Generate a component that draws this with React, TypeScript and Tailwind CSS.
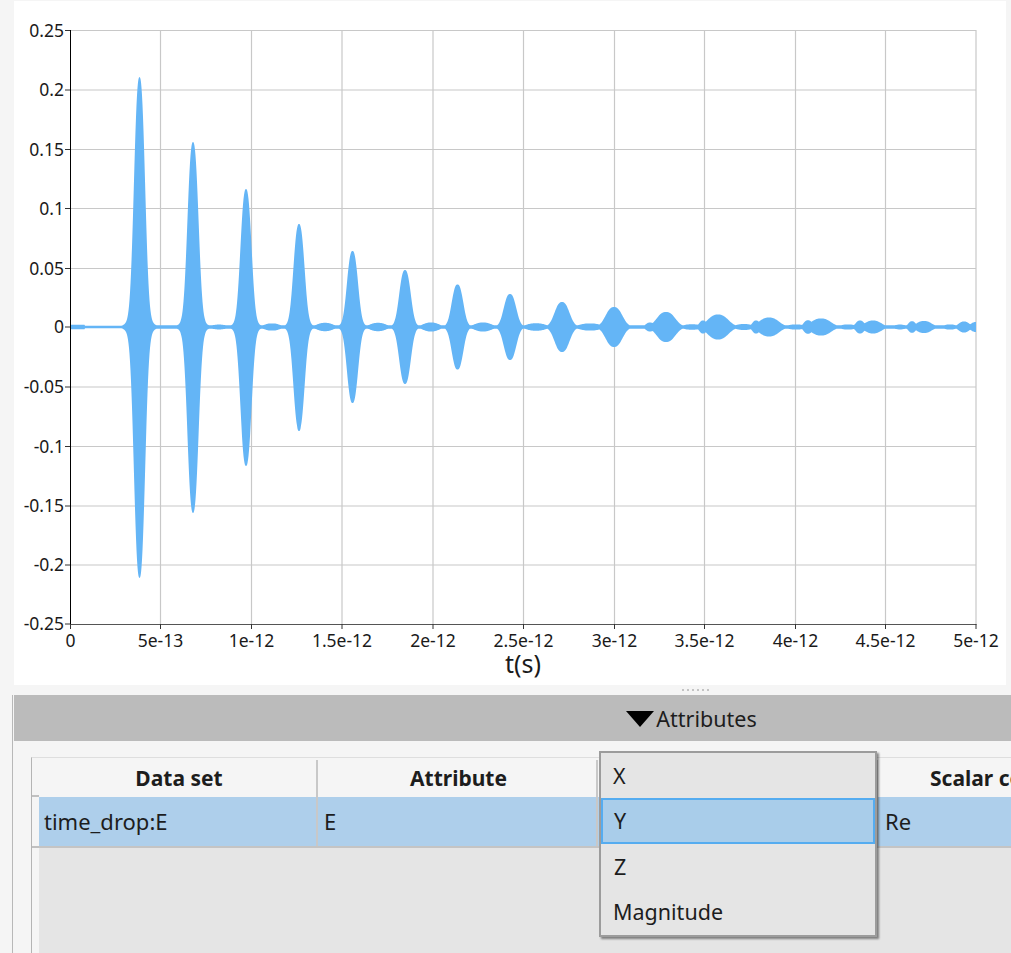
const xTicks = [
  { x: 70.5, label: '0' },
  { x: 160.5, label: '5e-13' },
  { x: 251.5, label: '1e-12' },
  { x: 342, label: '1.5e-12' },
  { x: 433, label: '2e-12' },
  { x: 523.5, label: '2.5e-12' },
  { x: 614.5, label: '3e-12' },
  { x: 704.5, label: '3.5e-12' },
  { x: 795.5, label: '4e-12' },
  { x: 885.5, label: '4.5e-12' },
  { x: 976, label: '5e-12' },
]

const yTicks = [
  { y: 30.5, label: '0.25' },
  { y: 90, label: '0.2' },
  { y: 149.5, label: '0.15' },
  { y: 208.5, label: '0.1' },
  { y: 268.5, label: '0.05' },
  { y: 327, label: '0' },
  { y: 387, label: '-0.05' },
  { y: 446.5, label: '-0.1' },
  { y: 506, label: '-0.15' },
  { y: 565, label: '-0.2' },
  { y: 624, label: '-0.25' },
]

// x centre, amplitude in px, sigma
const peaks = [
  [139.5, 250, 5], [193, 185, 5], [246, 138, 5], [299, 103, 5], [352.5, 76, 5],
  [405, 57, 5.2], [457.5, 42.5, 5.2], [510, 33, 5.6], [562, 25, 6.7], [614, 20, 7.5],
  [666, 15, 8.3], [718, 12.5, 9.2], [769, 9.5, 8.9], [821, 8.5, 9], [873, 6.5, 7.5],
  [924, 6, 7], [964, 5.5, 5],
]

// small lobes between the main bursts
const lobes = [
  [166, 1.6, 7], [219, 2.4, 7.5], [272, 3.6, 7.5], [325, 4.2, 7.5], [378, 4.2, 7.5],
  [431, 4.5, 7.5], [483, 4.5, 8], [536, 3.8, 9], [590, 3.6, 10], [650, 4.5, 4],
  [703, 6.5, 3.5], [756, 6.5, 3.5], [808, 6.8, 4], [860, 6.5, 4], [912, 5.8, 3.5],
  [692, 2.8, 8], [744, 3, 8], [796, 2.6, 8], [848, 2.6, 7], [900, 2.4, 6], [950, 2.6, 6], [976, 5, 5],
]

function envelope(x: number) {
  let e = x < 85 ? 2.2 : x < 125 ? 1.2 : 1.8
  for (const [c, a, s] of peaks) {
    const d = Math.abs(x - c)
    // rounded tip with a small flare at the foot
    const v = a * (0.93 * Math.exp(-Math.pow(d / (1.39 * s), 2.5)) + 0.07 * Math.exp(-Math.pow(d / (2.2 * s), 2)))
    if (v > e) e = v
  }
  for (const [c, a, s] of lobes) {
    const v = a * Math.exp(-Math.pow(Math.abs(x - c) / (1.39 * s), 2.5))
    if (v > e) e = v
  }
  return e
}

function wavePath() {
  const top: string[] = []
  const bottom: string[] = []
  for (let x = 70.5; x <= 976; x += 0.5) {
    const e = envelope(x)
    top.push(`${x},${(327 - e).toFixed(1)}`)
    bottom.unshift(`${x},${(327 + e + (e > 100 ? 1 : 0)).toFixed(1)}`)
  }
  return `M${top.join('L')}L${bottom.join('L')}Z`
}

function Chart() {
  return (
    <svg viewBox="14 1 992 684" className="block w-[992px] h-[684px]">
      {xTicks.slice(1).map((t) => (
        <line key={t.x} x1={t.x} x2={t.x} y1={30} y2={624} stroke="#c8c8c8" strokeWidth="1.2" />
      ))}
      {yTicks.slice(0, -1).map((t) => (
        <line key={t.y} x1={70} x2={976} y1={t.y} y2={t.y} stroke="#c8c8c8" strokeWidth="1.2" />
      ))}
      <path d={wavePath()} fill="#64b5f6" />
      <line x1={70.5} x2={70.5} y1={30} y2={624.5} stroke="#000" />
      <line x1={70} x2={976.5} y1={624.5} y2={624.5} stroke="#555" />
      {yTicks.map((t) => (
        <g key={t.label}>
          <line x1={65} x2={70} y1={t.y} y2={t.y} stroke="#333" />
          <text x={64} y={t.y + 6} textAnchor="end" fontSize="17.5" fill="#1a1a1a" fontFamily="'Noto Sans', sans-serif">{t.label}</text>
        </g>
      ))}
      {xTicks.map((t) => (
        <g key={t.label}>
          <line x1={t.x} x2={t.x} y1={624} y2={629} stroke="#333" />
          <text x={t.x} y={647} textAnchor="middle" fontSize="17.5" fill="#1a1a1a" fontFamily="'Noto Sans', sans-serif">{t.label}</text>
        </g>
      ))}
      <text x={523} y={673} textAnchor="middle" fontSize="25" fill="#1a1a1a" fontFamily="'Noto Sans', sans-serif">t(s)</text>
    </svg>
  )
}

function AttributeTable() {
  return (
    <div className="ml-[17px] mt-4 flex h-[196px] border-l border-t border-l-[#b4b4b4] border-t-[#dedede]">
      <div className="w-[7px] shrink-0 flex flex-col bg-[#f5f5f5]">
        <div className="h-[39px] border-b-2 border-[#c0c0c0]" />
        <div className="h-[51px] border-b-2 border-[#c0c0c0]" />
      </div>
      <div className="flex-1 flex flex-col bg-[#e5e5e5] overflow-hidden">
        <div className="flex h-[39px] shrink-0 bg-[#f5f5f5] font-bold text-[#1d1d1d] text-[21px] pt-[2px]">
          <div className="w-[279px] shrink-0 border-r-2 border-[#c8c8c8] flex items-center justify-center pl-[3px]">Data set</div>
          <div className="w-[280px] shrink-0 border-r-2 border-[#c8c8c8] flex items-center justify-center pl-[3px]">Attribute</div>
          <div className="w-[280px] shrink-0 border-r-2 border-[#c8c8c8] flex items-center justify-center">Component</div>
          <div className="w-[280px] shrink-0 flex items-center pl-[52px] whitespace-nowrap">Scalar component</div>
        </div>
        <div className="flex h-[51px] shrink-0 bg-[#aecfeb] border-b-2 border-[#c4c4c4] text-[#1d1d1d] text-[22px]">
          <div className="w-[279px] shrink-0 border-r-2 border-[#c8c8c8] flex items-center pl-[5px]">time_drop:E</div>
          <div className="w-[280px] shrink-0 border-r-2 border-[#c8c8c8] flex items-center pl-[6px]">E</div>
          <div className="w-[280px] shrink-0 border-r-2 border-[#c8c8c8]" />
          <div className="w-[280px] shrink-0 flex items-center pl-[7px]">Re</div>
        </div>
      </div>
    </div>
  )
}

function ComponentMenu() {
  return (
    <div className="absolute left-[586px] top-[56px] w-[278px] h-[186px] bg-[#e5e5e5] border-2 border-[#9c9c9c] shadow-[2px_2px_2px_rgba(0,0,0,0.45)] py-px text-[21.5px] text-[#1d1d1d]">
      <div className="h-[44px] flex items-center pl-[12px]">X</div>
      <div className="h-[46px] flex items-center pl-[11px] bg-[#a9cdea] border-2 border-[#55acf0]">Y</div>
      <div className="h-[46px] flex items-center pl-[13px]">Z</div>
      <div className="h-[45px] flex items-center pl-[12px]">Magnitude</div>
    </div>
  )
}

export default function App() {
  return (
    <div className="w-[1011px] h-[953px] overflow-hidden bg-[#f5f5f5] flex flex-col font-['Noto_Sans',sans-serif]">
      <div className="ml-[14px] mt-px w-[992px] h-[684px] shrink-0 bg-white">
        <Chart />
      </div>
      <div className="h-[10px] shrink-0 flex items-center justify-center gap-[3px] pl-[379px]">
        {[0, 1, 2, 3, 4, 5].map((i) => (
          <span key={i} className="w-[2px] h-[2px] bg-[#c4c4c4]" />
        ))}
      </div>
      <div className="relative flex-1 ml-3 border-l border-[#b8b8b8] pl-px">
        <div className="h-[46px] bg-[#bbbbbb] flex items-center justify-center gap-[2px] pl-[358px] pt-[2px] text-[21.5px] text-[#1d1d1d] whitespace-nowrap">
          <span className="w-0 h-0 border-l-[14px] border-r-[14px] border-t-[16px] border-l-transparent border-r-transparent border-t-black" />
          <span>Attributes</span>
        </div>
        <AttributeTable />
        <ComponentMenu />
      </div>
    </div>
  )
}
